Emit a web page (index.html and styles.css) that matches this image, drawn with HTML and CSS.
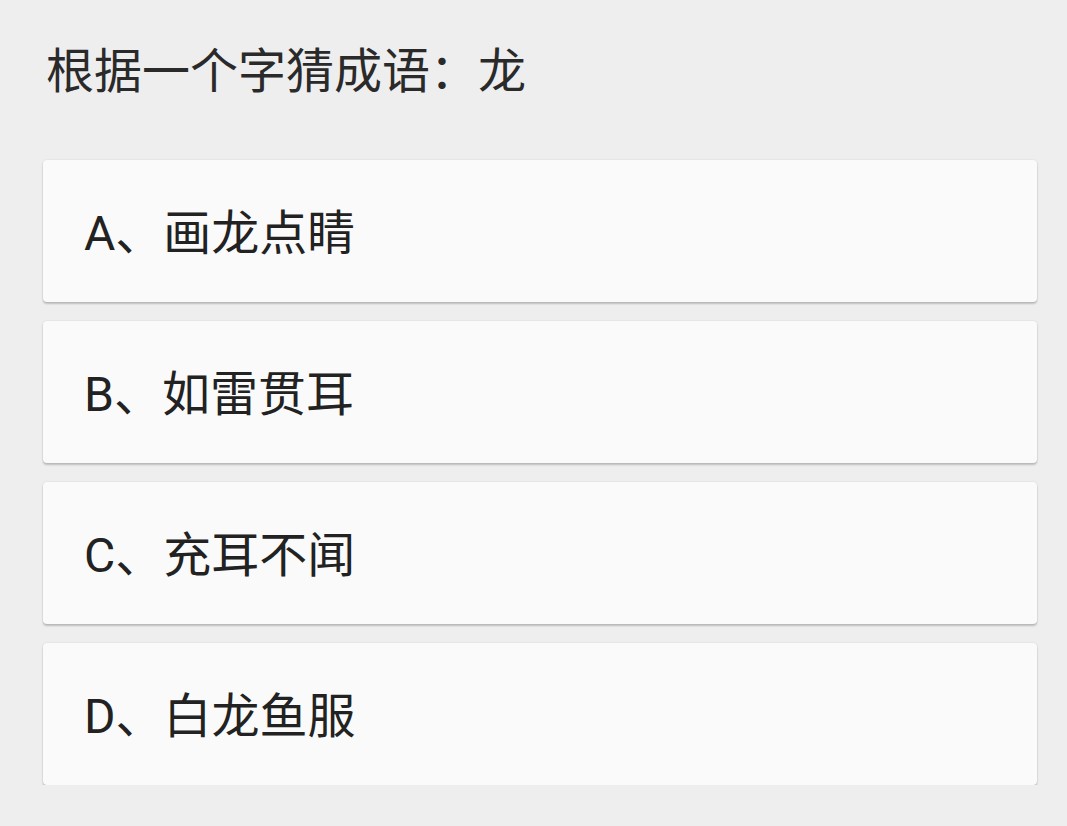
FILE: index.html
```html
<!DOCTYPE html>
<html lang="zh-CN">
<head>
<meta charset="utf-8">
<title>猜成语</title>
<link rel="stylesheet" href="styles.css">
</head>
<body>
<main class="page">
  <h1 class="question">根据一个字猜成语：龙</h1>
  <ul class="options">
    <li class="option">A、画龙点睛</li>
    <li class="option">B、如雷贯耳</li>
    <li class="option">C、充耳不闻</li>
    <li class="option">D、白龙鱼服</li>
  </ul>
</main>
</body>
</html>
```
FILE: styles.css
```css
html, body {
  margin: 0;
  padding: 0;
  background: #eeeeee;
}
body {
  font-family: Roboto, "Noto Sans CJK SC", sans-serif;
  color: #222222;
}
.page {
  padding: 48px 30px 0 43px;
}
.question {
  margin: 0 0 0 3px;
  font-size: 48px;
  font-weight: 400;
  line-height: 48px;
  height: 52px;
  color: #2a2a2a;
}
.options {
  list-style: none;
  margin: 60px 0 0 0;
  padding: 0;
  display: flex;
  flex-direction: column;
  gap: 19px;
}
.option {
  height: 142px;
  box-sizing: border-box;
  display: flex;
  align-items: center;
  padding: 0 0 5px 41px;
  background: #fafafa;
  border-radius: 4px;
  box-shadow: 0 2px 2px rgba(0, 0, 0, 0.2), 0 0 2px rgba(0, 0, 0, 0.12);
  font-size: 48px;
  color: #222222;
}
```
